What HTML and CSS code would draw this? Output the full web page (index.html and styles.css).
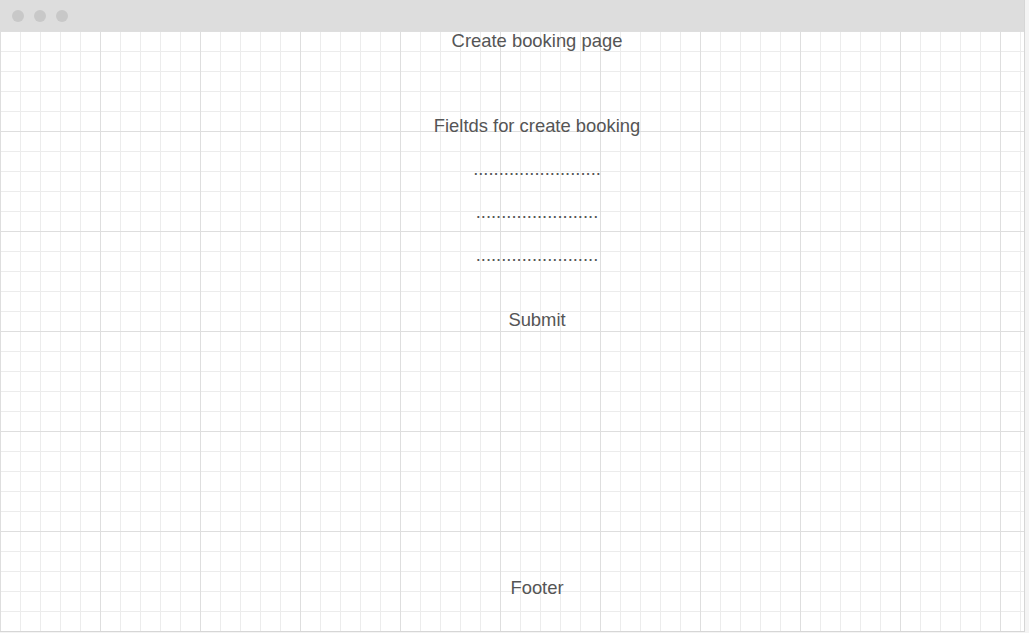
FILE: index.html
```html
<!DOCTYPE html>
<html>
<head>
<meta charset="utf-8">
<link rel="stylesheet" href="styles.css">
</head>
<body>
<div class="window">
  <div class="titlebar">
    <span class="dot"></span><span class="dot"></span><span class="dot"></span>
  </div>
  <div class="canvas">
    <main class="content">
      <div class="line title">Create booking page</div>
      <div class="fields">
        <div class="line">Fieltds for create booking</div>
        <div class="line">.........................</div>
        <div class="line">........................</div>
        <div class="line">........................</div>
      </div>
      <div class="line submit">Submit</div>
    </main>
    <footer class="line footer">Footer</footer>
  </div>
</div>
</body>
</html>
```
FILE: styles.css
```css
html, body {
  margin: 0;
  padding: 0;
  background: #f4f4f4;
}
body {
  font-family: "Liberation Sans", Arial, sans-serif;
  color: #555;
  width: 1029px;
  height: 633px;
  overflow: hidden;
}
.window {
  width: 1024px;
  height: 631px;
  border-right: 1px solid #d6d6d6;
  border-bottom: 1px solid #d6d6d6;
  display: flex;
  flex-direction: column;
  background: #fff;
}
.titlebar {
  height: 31px;
  flex: none;
  background: #dddddd;
  display: flex;
  align-items: center;
  gap: 10px;
  padding-left: 12px;
  box-sizing: border-box;
}
.dot {
  width: 12px;
  height: 12px;
  border-radius: 50%;
  background: #c8c8c8;
}
.canvas {
  flex: 1;
  display: flex;
  flex-direction: column;
  padding-left: 50px;
  background-color: #fff;
  background-image:
    linear-gradient(to right, #dedede 1px, transparent 1px),
    linear-gradient(to bottom, #dedede 1px, transparent 1px),
    linear-gradient(to right, #ececec 1px, transparent 1px),
    linear-gradient(to bottom, #ececec 1px, transparent 1px);
  background-size: 100px 100px, 100px 100px, 20px 20px, 20px 20px;
}
.content {
  flex: 1;
  display: flex;
  flex-direction: column;
  align-items: center;
}
.line {
  font-size: 18.4px;
  line-height: 20px;
  text-align: center;
}
.fields {
  margin-top: 65px;
  display: flex;
  flex-direction: column;
  align-items: center;
  gap: 23px;
}
.submit {
  margin-top: 45px;
}
.footer {
  padding-bottom: 33px;
}
```
